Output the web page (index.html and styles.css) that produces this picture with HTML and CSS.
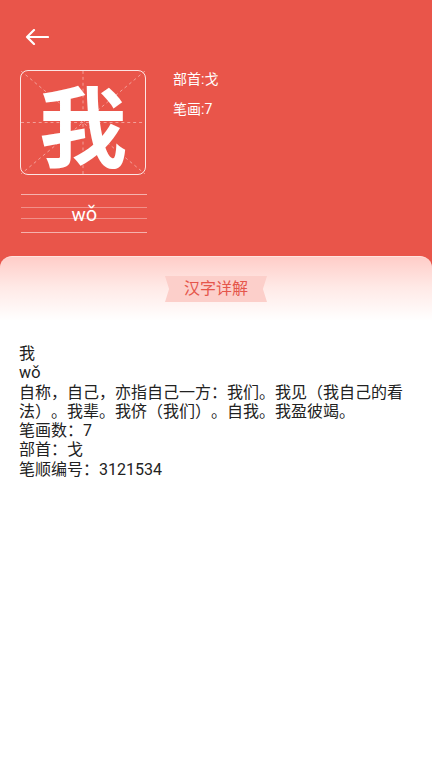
FILE: index.html
```html
<!DOCTYPE html>
<html lang="zh-CN">
<head>
    <meta charset="UTF-8">
    <meta name="viewport" content="width=device-width, initial-scale=1.0">
    <title>汉字详解</title>
    <link rel="stylesheet" href="styles.css">
</head>
<body>
    <div class="header">
        <div class="back">
            <svg width="24" height="16" viewBox="0 0 24 16">
                <path d="M23 8H2M9 1L2 8l7 7" fill="none" stroke="#fff" stroke-width="2.2" stroke-linecap="round" stroke-linejoin="round"/>
            </svg>
        </div>
        <div class="char-row">
            <div class="char-col">
                <div class="char-box">
                    <svg class="grid" viewBox="0 0 126 105" preserveAspectRatio="none">
                        <g stroke="rgba(255,255,255,0.45)" stroke-width="1" stroke-dasharray="3 3" fill="none">
                            <line x1="0" y1="0" x2="126" y2="105"/>
                            <line x1="126" y1="0" x2="0" y2="105"/>
                            <line x1="63" y1="0" x2="63" y2="105"/>
                            <line x1="0" y1="52.5" x2="126" y2="52.5"/>
                        </g>
                    </svg>
                    <span class="big-char">我</span>
                </div>
                <div class="pinyin-lines">
                    <span class="pinyin">wǒ</span>
                </div>
            </div>
            <div class="char-info">
                <div>部首:戈</div>
                <div>笔画:7</div>
            </div>
        </div>
    </div>

    <div class="card">
        <div class="ribbon">汉字详解</div>
        <div class="detail">
            我<br>
            wǒ<br>
            自称，自己，亦指自己一方：我们。我见（我自己的看法）。我辈。我侪（我们）。自我。我盈彼竭。<br>
            笔画数：7<br>
            部首：戈<br>
            笔顺编号：3121534
        </div>
    </div>
</body>
</html>
```

FILE: styles.css
```css
body {
    margin: 0;
    background-color: #fff;
    font-family: Roboto, "Noto Sans CJK SC", sans-serif;
    color: #222;
    text-spacing-trim: space-all;
}
.header {
    background-color: #e9554a;
    padding: 29px 20px 25px 20px;
    height: 214px;
}
.back {
    height: 16px;
    padding-left: 5px;
}
.back svg {
    display: block;
}
.char-row {
    display: flex;
    margin-top: 25px;
}
.char-col {
    width: 127px;
}
.char-box {
    position: relative;
    width: 124px;
    height: 103px;
    border: 1px solid rgba(255, 255, 255, 0.85);
    border-radius: 8px;
    display: flex;
    align-items: center;
    justify-content: center;
}
.grid {
    position: absolute;
    left: 0;
    top: 0;
    width: 100%;
    height: 100%;
}
.big-char {
    position: relative;
    color: #fff;
    font-family: "Noto Sans CJK SC", sans-serif;
    font-size: 88px;
    font-weight: bold;
    line-height: 88px;
    margin-top: -2px;
}
.pinyin-lines {
    margin-top: 19px;
    margin-left: 1px;
    height: 37px;
    border-top: 1px solid rgba(255, 255, 255, 0.55);
    border-bottom: 1px solid rgba(255, 255, 255, 0.55);
    background-image:
        linear-gradient(rgba(255, 255, 255, 0.35), rgba(255, 255, 255, 0.35)),
        linear-gradient(rgba(255, 255, 255, 0.35), rgba(255, 255, 255, 0.35));
    background-size: 100% 1px, 100% 1px;
    background-position: 0 12px, 0 23px;
    background-repeat: no-repeat;
    display: flex;
    justify-content: center;
    align-items: center;
}
.pinyin {
    color: #fff;
    font-size: 19px;
    line-height: 1;
    margin-left: 1px;
    margin-top: 2px;
}
.char-info {
    margin-left: 26px;
    margin-top: -6px;
    color: #fff;
    font-size: 14px;
    line-height: 30px;
}
.card {
    margin-top: -12px;
    border-radius: 12px 12px 0 0;
    background: linear-gradient(#ffcdc8 0px, #ffe9e6 30px, #fff 64px);
    border-top: 1px solid #ffe3df;
    padding-top: 19px;
}
.ribbon {
    width: 102px;
    height: 26px;
    margin: 0 auto 0 165px;
    background-color: #fccfca;
    color: #e5564b;
    font-size: 16px;
    line-height: 26px;
    text-align: center;
    clip-path: polygon(0 0, 100% 0, 96% 50%, 100% 100%, 0 100%, 4% 50%);
}
.detail {
    padding: 42px 19px 0 19px;
    font-size: 16px;
    line-height: 19.3px;
    color: #222;
}
```
